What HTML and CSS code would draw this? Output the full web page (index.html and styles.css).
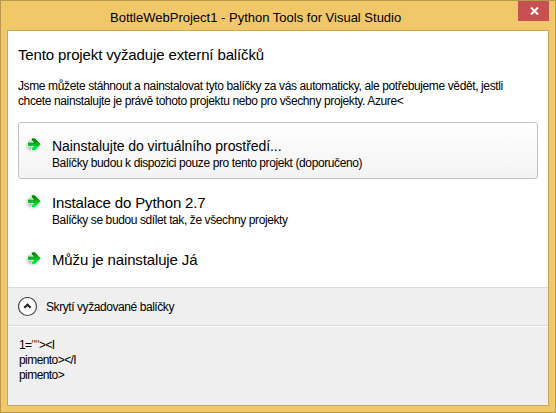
FILE: index.html
```
<!DOCTYPE html>
<html lang="cs">
<head>
<meta charset="utf-8">
<title>BottleWebProject1 - Python Tools for Visual Studio</title>
<link rel="stylesheet" href="styles.css">
</head>
<body>
<svg class="defs" width="0" height="0">
  <defs>
    <linearGradient id="green" x1="0" y1="0" x2="0" y2="1">
      <stop offset="0.2" stop-color="#078a0c"/><stop offset="0.8" stop-color="#05e63c"/>
    </linearGradient>
    <radialGradient id="shade">
      <stop offset="0.4" stop-color="#b4b4b8"/><stop offset="1" stop-color="#d0d0d4" stop-opacity="0"/>
    </radialGradient>
    <symbol id="arrow" viewBox="0 0 18 18">
      <ellipse cx="7" cy="9.500" rx="7.500" ry="7" fill="url(#shade)"/>
      <path d="M3 6.500H9L6.700 4.200V2.200H9.800L15.700 8.200L9.800 14.300H6.700V12.300L9 10H3Z" fill="url(#green)" stroke="#fff" stroke-width="1.200" paint-order="stroke"/>
    </symbol>
  </defs>
</svg>
<div class="window">
  <header class="titlebar">
    <h1 class="caption">BottleWebProject1 - Python Tools for Visual Studio</h1>
    <button class="close" aria-label="Zavřít"><svg width="9" height="8" viewBox="0 0 9 8"><path d="M1 .5L8 7.500M8 .5L1 7.500" stroke="#fff" stroke-width="2"/></svg></button>
  </header>
  <main class="client">
    <section class="content">
      <h2 class="heading">Tento projekt vyžaduje externí balíčků</h2>
      <p class="intro">Jsme můžete stáhnout a nainstalovat tyto balíčky za vás automaticky, ale potřebujeme vědět, jestli<br>chcete nainstalujte je právě tohoto projektu nebo pro všechny projekty. Azure&lt;</p>
      <div class="options">
        <div class="option selected">
          <svg class="arrow"><use href="#arrow"/></svg>
          <div><div class="name compact">Nainstalujte do virtuálního prostředí...</div><div class="note">Balíčky budou k dispozici pouze pro tento projekt (doporučeno)</div></div>
        </div>
        <div class="option">
          <svg class="arrow"><use href="#arrow"/></svg>
          <div><div class="name">Instalace do Python 2.7</div><div class="note">Balíčky se budou sdílet tak, že všechny projekty</div></div>
        </div>
        <div class="option">
          <svg class="arrow"><use href="#arrow"/></svg>
          <div><div class="name">Můžu je nainstaluje Já</div></div>
        </div>
      </div>
    </section>
    <section class="expander">
      <svg width="20" height="20" viewBox="0 0 20 20"><circle cx="9.500" cy="9.500" r="9" fill="#fff" stroke="#4a4a4a" stroke-width="1.200"/><path d="M6.300 10.800L9.500 7.700L12.700 10.800" fill="none" stroke="#222" stroke-width="2.200"/></svg>
      <span class="label">Skrytí vyžadované balíčky</span>
    </section>
    <section class="packages">1=<span class="quote">""</span>&gt;&lt;I<br>pimento&gt;&lt;/I<br>pimento&gt;</section>
  </main>
</div>
</body>
</html>
```
FILE: styles.css
```
* { box-sizing: border-box; }
body {
  margin: 0;
  font: 12px/15px "Liberation Sans", Arial, sans-serif;
  letter-spacing: -0.38px;
  color: #000;
}
.defs { position: absolute; }
.window {
  width: 556px;
  height: 413px;
  display: flex;
  flex-direction: column;
  background: #f0c869;
  border: 1px solid #b99a4b;
  padding: 0 6px 6px;
}
.titlebar {
  height: 29px;
  flex: none;
  display: flex;
  align-items: flex-start;
  padding-left: 103px;
}
.caption {
  margin: 8px 0 0;
  font-size: 13px;
  line-height: 18px;
  font-weight: normal;
  letter-spacing: 0;
  white-space: nowrap;
}
.close {
  width: 31px;
  height: 20px;
  margin-left: auto;
  padding: 0 0 0 1px;
  border: 0;
  background: #c75050;
  display: flex;
  align-items: center;
  justify-content: center;
}
.client {
  flex: 1;
  display: flex;
  flex-direction: column;
  background: #efefef;
  border: 1px solid #c6a75a;
}
.content {
  height: 256px;
  background: #fff;
  padding: 14px 10px 0;
}
.heading {
  margin: 0;
  font-size: 15px;
  line-height: 20px;
  font-weight: normal;
  letter-spacing: -0.13px;
}
.intro {
  margin: 14px 0 13px;
  white-space: nowrap;
}
.option {
  height: 57px;
  display: flex;
  padding: 13px 0 0 6px;
  gap: 9px;
  border: 1px solid transparent;
  border-radius: 3px;
  white-space: nowrap;
}
.selected {
  border-color: #c3c3c3;
  background: linear-gradient(#fff, #f3f3f3);
}
.arrow {
  width: 18px;
  height: 18px;
  flex: none;
}
.name {
  font-size: 15px;
  line-height: 20px;
  letter-spacing: -0.14px;
}
.compact {
  font-size: 14px;
  letter-spacing: -0.06px;
}
.note { letter-spacing: -0.4px; }
.expander {
  height: 39px;
  display: flex;
  align-items: center;
  gap: 8px;
  padding-left: 10px;
  border-top: 1px solid #dcdcdc;
  border-bottom: 1px solid #dcdcdc;
}
.label {
  padding-top: 2px;
  letter-spacing: -0.43px;
}
.packages {
  flex: 1;
  border-top: 1px solid #fff;
  padding: 11px;
  letter-spacing: -0.57px;
}
.quote { color: #8a4a10; }
```
